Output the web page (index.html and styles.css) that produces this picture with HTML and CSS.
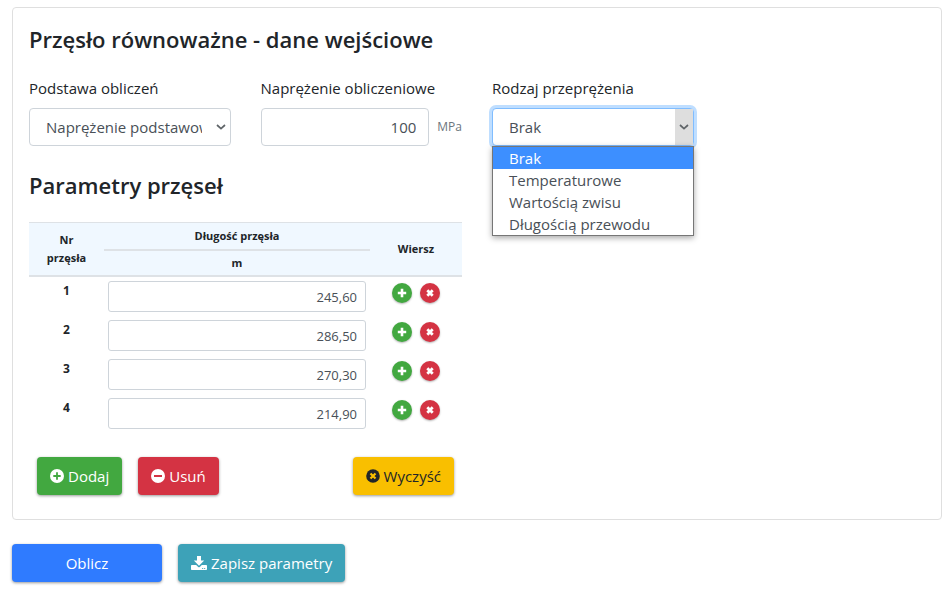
FILE: index.html
```html
<!DOCTYPE html>
<html lang="pl">
<head>
    <meta charset="utf-8">
    <meta name="viewport" content="width=device-width, initial-scale=1">
    <title>Przęsło równoważne</title>
    <link rel="stylesheet" href="styles.css">
</head>
<body>

<!-- Icons -->
<svg class="icon-defs" aria-hidden="true">
    <symbol id="icon-plus-circle" viewBox="0 0 14 14">
        <circle cx="7" cy="7" r="7" fill="currentColor"/>
        <path d="M7 3.3v7.4M3.3 7h7.4" fill="none" stroke="var(--cut)" stroke-width="1.8"/>
    </symbol>
    <symbol id="icon-minus-circle" viewBox="0 0 14 14">
        <circle cx="7" cy="7" r="7" fill="currentColor"/>
        <path d="M3 7h8" fill="none" stroke="var(--cut)" stroke-width="2"/>
    </symbol>
    <symbol id="icon-times-circle" viewBox="0 0 14 14">
        <circle cx="7" cy="7" r="6.8" fill="currentColor"/>
        <path d="M4.500 4.500l5 5M9.500 4.500l-5 5" fill="none" stroke="var(--cut)" stroke-width="2.2"/>
    </symbol>
    <symbol id="icon-plus" viewBox="0 0 10 10">
        <path d="M5 .8v8.4M.8 5h8.4" fill="none" stroke="currentColor" stroke-width="2.6"/>
    </symbol>
    <symbol id="icon-times" viewBox="0 0 10 10">
        <path d="M2.300 2.300l5.400 5.400M7.700 2.300L2.300 7.700" fill="none" stroke="currentColor" stroke-width="2.8"/>
    </symbol>
    <symbol id="icon-download" viewBox="0 0 16 14">
        <path d="M6 0h4v4.6h3.2L8 9.8 2.8 4.6H6z" fill="currentColor"/>
        <path d="M.8 9h4.400l2 2a1.200 1.200 0 0 0 1.600 0l2-2h4.400c.5 0 .8.3.8.8v3.400c0 .5-.3.8-.8.8H.8c-.5 0-.8-.3-.8-.8V9.800c0-.5.3-.8.8-.8zM11.200 11.900v1h1v-1zm2 0v1h1v-1z" fill="currentColor" fill-rule="evenodd"/>
    </symbol>
    <symbol id="icon-chevron" viewBox="0 0 10 6">
        <path d="M1 1l4 3.600L9 1" fill="none" stroke="currentColor" stroke-width="1.7"/>
    </symbol>
</svg>

<form class="page">
    <div class="card">
        <h4 class="title">Przęsło równoważne - dane wejściowe</h4>

        <div class="fields">
            <div class="field">
                <label for="basis">Podstawa obliczeń</label>
                <div class="select-box">
                    <select class="control" id="basis">
                        <option>Naprężenie podstawowe</option>
                    </select>
                    <span class="arrow"><svg><use href="#icon-chevron"/></svg></span>
                </div>
            </div>

            <div class="field">
                <label for="stress">Naprężenie obliczeniowe</label>
                <div class="unit-box">
                    <input class="control number" type="text" id="stress" value="100">
                    <span class="unit">MPa</span>
                </div>
            </div>

            <div class="field">
                <label for="overstress">Rodzaj przeprężenia</label>
                <div class="select-box open">
                    <select class="control" id="overstress">
                        <option>Brak</option>
                        <option>Temperaturowe</option>
                        <option>Wartością zwisu</option>
                        <option>Długością przewodu</option>
                    </select>
                    <span class="arrow"><svg><use href="#icon-chevron"/></svg></span>
                    <ul class="options" role="listbox" aria-label="Rodzaj przeprężenia">
                        <li class="selected" role="option" aria-selected="true">Brak</li>
                        <li role="option">Temperaturowe</li>
                        <li role="option">Wartością zwisu</li>
                        <li role="option">Długością przewodu</li>
                    </ul>
                </div>
            </div>
        </div>

        <div class="spans">
            <h4 class="title">Parametry przęseł</h4>

            <table class="span-table">
                <colgroup>
                    <col class="col-number">
                    <col>
                    <col class="col-row">
                </colgroup>
                <thead>
                    <tr>
                        <th rowspan="2">Nr<br>przęsła</th>
                        <th>Długość przęsła</th>
                        <th rowspan="2">Wiersz</th>
                    </tr>
                    <tr>
                        <th class="length-unit">m</th>
                    </tr>
                </thead>
                <tbody>
                    <tr>
                        <th scope="row">1</th>
                        <td><input class="control small number" type="text" value="245,60" aria-label="Długość przęsła 1"></td>
                        <td>
                            <div class="row-actions">
                                <button class="round green" type="button" aria-label="Dodaj wiersz"><svg><use href="#icon-plus"/></svg></button>
                                <button class="round red" type="button" aria-label="Usuń wiersz"><svg><use href="#icon-times"/></svg></button>
                            </div>
                        </td>
                    </tr>
                    <tr>
                        <th scope="row">2</th>
                        <td><input class="control small number" type="text" value="286,50" aria-label="Długość przęsła 2"></td>
                        <td>
                            <div class="row-actions">
                                <button class="round green" type="button" aria-label="Dodaj wiersz"><svg><use href="#icon-plus"/></svg></button>
                                <button class="round red" type="button" aria-label="Usuń wiersz"><svg><use href="#icon-times"/></svg></button>
                            </div>
                        </td>
                    </tr>
                    <tr>
                        <th scope="row">3</th>
                        <td><input class="control small number" type="text" value="270,30" aria-label="Długość przęsła 3"></td>
                        <td>
                            <div class="row-actions">
                                <button class="round green" type="button" aria-label="Dodaj wiersz"><svg><use href="#icon-plus"/></svg></button>
                                <button class="round red" type="button" aria-label="Usuń wiersz"><svg><use href="#icon-times"/></svg></button>
                            </div>
                        </td>
                    </tr>
                    <tr>
                        <th scope="row">4</th>
                        <td><input class="control small number" type="text" value="214,90" aria-label="Długość przęsła 4"></td>
                        <td>
                            <div class="row-actions">
                                <button class="round green" type="button" aria-label="Dodaj wiersz"><svg><use href="#icon-plus"/></svg></button>
                                <button class="round red" type="button" aria-label="Usuń wiersz"><svg><use href="#icon-times"/></svg></button>
                            </div>
                        </td>
                    </tr>
                </tbody>
            </table>

            <div class="table-buttons">
                <button class="btn green" type="button"><svg><use href="#icon-plus-circle"/></svg>Dodaj</button>
                <button class="btn red" type="button"><svg><use href="#icon-minus-circle"/></svg>Usuń</button>
                <button class="btn yellow push" type="button"><svg><use href="#icon-times-circle"/></svg>Wyczyść</button>
            </div>
        </div>
    </div>

    <div class="page-buttons">
        <button class="btn blue wide" type="button">Oblicz</button>
        <button class="btn teal" type="button"><svg class="download"><use href="#icon-download"/></svg>Zapisz parametry</button>
    </div>
</form>

</body>
</html>
```
FILE: styles.css
```css
* {
    box-sizing: border-box;
}

body {
    margin: 0;
    background: #fff;
    color: #212529;
    font-family: "Open Sans", "Noto Sans", sans-serif;
    font-size: 15px;
    line-height: 24px;
}

.icon-defs {
    display: none;
}

.page {
    padding: 7px 10px 12px 12px;
}

.card {
    padding: 16px 16px 24px;
    border: 1px solid #dfdfdf;
    border-radius: 4px;
}

.title {
    margin: 0 0 22px;
    font-size: 22px;
    font-weight: 600;
    line-height: 30px;
}

/* Form fields */
.fields {
    display: grid;
    grid-template-columns: repeat(4, 1fr);
    gap: 30px;
    margin-bottom: 24px;
}

.field {
    min-width: 0;
}

.field label {
    display: block;
    margin-bottom: 8px;
    white-space: nowrap;
}

.control {
    display: block;
    width: 100%;
    height: 38px;
    padding: 0 12px;
    border: 1px solid #ced4da;
    border-radius: 4px;
    background: #fff;
    color: #495057;
    font: inherit;
    outline: none;
}

.number {
    text-align: right;
}

.small {
    height: 31px;
    padding: 0 8px;
    border-radius: 3px;
    font-size: 13px;
}

.select-box {
    position: relative;
}

.select-box .control {
    padding: 0 28px 0 16px;
    appearance: none;
}

.arrow {
    position: absolute;
    top: 1px;
    right: 1px;
    bottom: 1px;
    display: flex;
    align-items: center;
    justify-content: center;
    width: 18px;
    color: #5f6468;
    pointer-events: none;
}

.arrow svg {
    width: 10px;
    height: 6px;
}

.open .control {
    border-color: #80bdff;
    box-shadow: 0 0 0 3px #bfdeff;
}

.open .arrow {
    background: #dedede;
}

.options {
    position: absolute;
    top: 100%;
    left: 0;
    right: 0;
    margin: 0;
    padding: 0;
    border: 1px solid #767676;
    background: #fff;
    box-shadow: 0 2px 6px rgba(0, 0, 0, 0.35);
    color: #495057;
    line-height: 22px;
    list-style: none;
}

.options li {
    padding: 0 16px;
}

.options .selected {
    background: #3d8fff;
    color: #fff;
}

.unit-box {
    display: flex;
    align-items: center;
    gap: 8px;
}

.unit-box .control {
    flex: 1;
    min-width: 0;
}

.unit {
    color: #6c757d;
    font-size: 12px;
}

/* Span table */
.spans {
    width: calc(50% - 15px);
}

.span-table {
    width: 100%;
    border-spacing: 0;
    table-layout: fixed;
    font-size: 12px;
    line-height: 20px;
}

.col-number {
    width: 75px;
}

.col-row {
    width: 92px;
}

.span-table th,
.span-table td {
    padding: 4px;
    text-align: center;
}

.span-table thead {
    background: #f0f8ff;
    line-height: 18px;
}

.span-table thead th {
    font-size: 11px;
    border-bottom: 2px solid #dee2e6;
}

.span-table thead tr:first-child th {
    border-top: 1px solid #dee2e6;
}

.span-table .length-unit {
    padding: 3px;
}

.span-table tbody th,
.span-table tbody td {
    vertical-align: top;
}

.row-actions {
    display: flex;
    justify-content: center;
    gap: 8px;
    padding-top: 2px;
}

.round {
    display: flex;
    align-items: center;
    justify-content: center;
    width: 20px;
    height: 20px;
    padding: 0;
    border: none;
    border-radius: 50%;
    box-shadow: 0 1px 2px rgba(0, 0, 0, 0.3);
}

.round svg {
    width: 10px;
    height: 10px;
}

/* Buttons */
.btn {
    display: flex;
    align-items: center;
    justify-content: center;
    gap: 4px;
    height: 38px;
    padding: 0 13px;
    border: none;
    border-radius: 4px;
    box-shadow: 0 1px 3px rgba(0, 0, 0, 0.4);
    font: inherit;
    cursor: pointer;
}

.btn svg {
    width: 14px;
    height: 14px;
}

.btn .download {
    width: 16px;
}

.green {
    --cut: #42a840;
    background: #42a840;
    color: #fff;
}

.red {
    --cut: #d43343;
    background: #d43343;
    color: #fff;
}

.yellow {
    --cut: #f9bf00;
    background: #f9bf00;
    color: #212529;
}

.blue {
    background: #2f7bff;
    color: #fff;
}

.teal {
    background: #3da2b8;
    color: #fff;
}

.table-buttons,
.page-buttons {
    display: flex;
    gap: 16px;
    margin-top: 24px;
}

.table-buttons {
    padding: 0 8px;
}

.push {
    margin-left: auto;
}

.wide {
    width: 150px;
}
```
